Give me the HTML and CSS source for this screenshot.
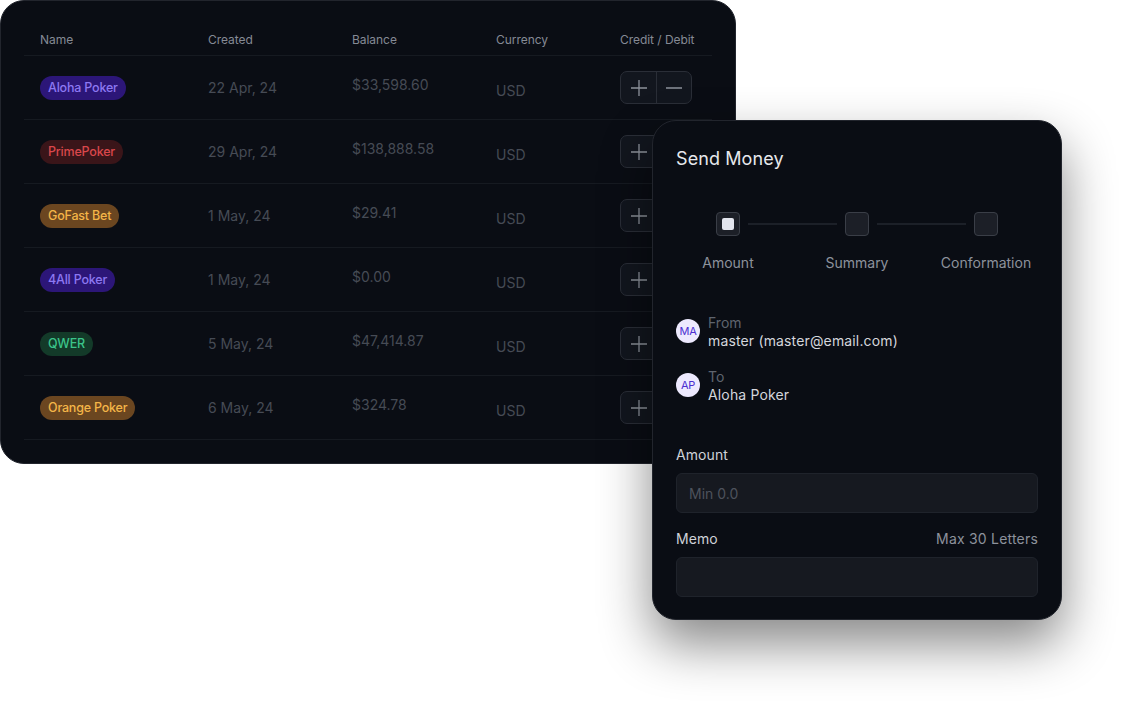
FILE: index.html
```html
<!DOCTYPE html>
<html>
<head>
<meta charset="utf-8">
<link rel="stylesheet" href="styles.css">
</head>
<body>
<div class="stage">
  <div class="table-card">
    <div class="row head">
      <div class="c name">Name</div>
      <div class="c created">Created</div>
      <div class="c balance">Balance</div>
      <div class="c currency">Currency</div>
      <div class="c action">Credit / Debit</div>
    </div>
    <div class="row">
      <div class="c name"><span class="badge purple">Aloha Poker</span></div>
      <div class="c created">22 Apr, 24</div>
      <div class="c balance">$33,598.60</div>
      <div class="c currency">USD</div>
      <div class="c action"><div class="btns"><span class="btn"><svg viewBox="0 0 18 18"><path d="M9 1v16M1 9h16"/></svg></span><span class="btn"><svg viewBox="0 0 18 18"><path d="M1 9h16"/></svg></span></div></div>
    </div>
    <div class="row">
      <div class="c name"><span class="badge red">PrimePoker</span></div>
      <div class="c created">29 Apr, 24</div>
      <div class="c balance">$138,888.58</div>
      <div class="c currency">USD</div>
      <div class="c action"><div class="btns"><span class="btn"><svg viewBox="0 0 18 18"><path d="M9 1v16M1 9h16"/></svg></span><span class="btn"><svg viewBox="0 0 18 18"><path d="M1 9h16"/></svg></span></div></div>
    </div>
    <div class="row">
      <div class="c name"><span class="badge orange">GoFast Bet</span></div>
      <div class="c created">1 May, 24</div>
      <div class="c balance">$29.41</div>
      <div class="c currency">USD</div>
      <div class="c action"><div class="btns"><span class="btn"><svg viewBox="0 0 18 18"><path d="M9 1v16M1 9h16"/></svg></span><span class="btn"><svg viewBox="0 0 18 18"><path d="M1 9h16"/></svg></span></div></div>
    </div>
    <div class="row">
      <div class="c name"><span class="badge purple">4All Poker</span></div>
      <div class="c created">1 May, 24</div>
      <div class="c balance">$0.00</div>
      <div class="c currency">USD</div>
      <div class="c action"><div class="btns"><span class="btn"><svg viewBox="0 0 18 18"><path d="M9 1v16M1 9h16"/></svg></span><span class="btn"><svg viewBox="0 0 18 18"><path d="M1 9h16"/></svg></span></div></div>
    </div>
    <div class="row">
      <div class="c name"><span class="badge green">QWER</span></div>
      <div class="c created">5 May, 24</div>
      <div class="c balance">$47,414.87</div>
      <div class="c currency">USD</div>
      <div class="c action"><div class="btns"><span class="btn"><svg viewBox="0 0 18 18"><path d="M9 1v16M1 9h16"/></svg></span><span class="btn"><svg viewBox="0 0 18 18"><path d="M1 9h16"/></svg></span></div></div>
    </div>
    <div class="row">
      <div class="c name"><span class="badge orange">Orange Poker</span></div>
      <div class="c created">6 May, 24</div>
      <div class="c balance">$324.78</div>
      <div class="c currency">USD</div>
      <div class="c action"><div class="btns"><span class="btn"><svg viewBox="0 0 18 18"><path d="M9 1v16M1 9h16"/></svg></span><span class="btn"><svg viewBox="0 0 18 18"><path d="M1 9h16"/></svg></span></div></div>
    </div>
  </div>

  <div class="modal">
    <div class="title">Send Money</div>
    <div class="stepper">
      <div class="track">
        <span class="sq active"><i></i></span>
        <span class="line"></span>
        <span class="sq"></span>
        <span class="line"></span>
        <span class="sq"></span>
      </div>
      <div class="labels">
        <span>Amount</span>
        <span>Summary</span>
        <span>Conformation</span>
      </div>
    </div>
    <div class="party">
      <span class="avatar">MA</span>
      <div class="pinfo">
        <div class="plabel">From</div>
        <div class="pval">master (master@email.com)</div>
      </div>
    </div>
    <div class="party to">
      <span class="avatar">AP</span>
      <div class="pinfo">
        <div class="plabel">To</div>
        <div class="pval">Aloha Poker</div>
      </div>
    </div>
    <div class="field amount">
      <div class="flabel"><span>Amount</span></div>
      <div class="input">Min 0.0</div>
    </div>
    <div class="field memo">
      <div class="flabel"><span>Memo</span><span class="hint">Max 30 Letters</span></div>
      <div class="input"></div>
    </div>
  </div>
</div>
</body>
</html>
```

FILE: styles.css
```css
* { box-sizing: border-box; }
html, body { margin: 0; padding: 0; background: #ffffff; }
body { font-family: Inter, "Noto Sans", sans-serif; width: 1142px; height: 709px; overflow: hidden; }

.stage { position: relative; width: 1142px; height: 709px; }

.table-card {
  width: 736px;
  height: 464px;
  background: #0a0d14;
  border: 1px solid #22252d;
  border-radius: 24px;
  padding: 23px 23px 24px 23px;
}

.row {
  display: flex;
  align-items: center;
  height: 64px;
  border-bottom: 1px solid #161a21;
}
.row.head { height: 32px; }
.row.head .c { font-size: 12px; letter-spacing: -0.05px; color: #858a94; padding-top: 0; padding-bottom: 0; }

.c { padding: 0 16px; font-size: 14px; color: #464b55; white-space: nowrap; }
.c.name { width: 168px; }
.c.created { width: 144px; }
.c.balance { width: 144px; padding-bottom: 6px; }
.c.currency { width: 124px; padding-top: 6px; }
.c.action { width: 108px; }

.badge {
  display: inline-flex;
  align-items: center;
  height: 24px;
  padding: 0 8px;
  border-radius: 12px;
  font-size: 12.5px;
  letter-spacing: -0.2px;
  font-weight: 500;
}
.badge.purple { background: #2c1678; color: #8c78f2; }
.badge.red { background: #3a1519; color: #d9474b; }
.badge.orange { background: #6b4620; color: #f4b548; }
.badge.green { background: #133a29; color: #3bc48a; }

.btns {
  display: inline-flex;
  height: 33px;
  border: 1px solid #2a2e37;
  border-radius: 7px;
  background: #12161e;
  overflow: hidden;
}
.btn {
  width: 35px;
  display: flex;
  align-items: center;
  justify-content: center;
}
.btn + .btn { border-left: 1px solid #2a2e37; }
.btn svg { width: 18px; height: 18px; fill: none; stroke: #8d929b; stroke-width: 1.3; }

.modal {
  position: absolute;
  left: 652px;
  top: 120px;
  width: 410px;
  height: 500px;
  background: #0a0d14;
  border: 1px solid #22252d;
  border-radius: 24px;
  padding: 24px 23px 23px;
  box-shadow: 0 24px 52px rgba(0, 0, 0, 0.47);
  display: flex;
  flex-direction: column;
}
.title { font-size: 18px; line-height: 28px; color: #e6e8ec; font-weight: 400; letter-spacing: 0.1px; }

.stepper { margin-top: 39px; }
.track {
  display: flex;
  align-items: center;
  margin-left: 40px;
  width: 282px;
}
.sq {
  width: 24px;
  height: 24px;
  flex: none;
  border: 1px solid #3a3e47;
  background: #1c1f27;
  border-radius: 4px;
  display: flex;
  align-items: center;
  justify-content: center;
}
.sq i { display: block; width: 12px; height: 12px; background: #e3e5ee; border-radius: 2px; }
.line { flex: 1; height: 2px; background: #1c2028; margin: 0 8px; }
.labels {
  display: grid;
  grid-template-columns: repeat(3, 129px);
  justify-content: center;
  margin: 17px -12px 0 -12px;
  font-size: 14px;
  line-height: 20px;
  color: #8d929c;
}
.labels span { text-align: center; }

.party { display: flex; align-items: center; gap: 8px; margin-top: 41px; }
.party.to { margin-top: 18px; }
.avatar {
  width: 24px;
  height: 24px;
  border-radius: 50%;
  background: #ede9fe;
  color: #4c2fd1;
  font-size: 11px;
  font-weight: 400;
  letter-spacing: -0.2px;
  display: flex;
  align-items: center;
  justify-content: center;
  margin-top: -3px;
  flex: none;
}
.plabel { font-size: 14px; line-height: 18px; color: #5f646e; }
.pval { font-size: 14px; line-height: 18px; color: #d4d6dc; font-weight: 400; letter-spacing: 0.15px; }

.field.amount { margin-top: 41px; }
.field.memo { margin-top: 16px; }
.flabel {
  display: flex;
  justify-content: space-between;
  font-size: 14px;
  line-height: 20px;
  color: #cfd2d8;
  font-weight: 400;
  letter-spacing: 0.1px;
}
.flabel .hint { color: #8d929c; font-weight: 400; letter-spacing: 0.2px; }
.input {
  margin-top: 8px;
  height: 40px;
  border: 1px solid #1f232b;
  background: #161920;
  border-radius: 6px;
  padding: 0 12px;
  display: flex;
  align-items: center;
  font-size: 14px;
  color: #4d525c;
}
```
